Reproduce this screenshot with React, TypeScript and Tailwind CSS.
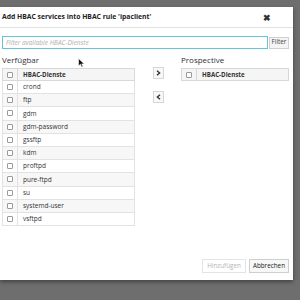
const AVAILABLE = [
  'crond',
  'ftp',
  'gdm',
  'gdm-password',
  'gssftp',
  'kdm',
  'proftpd',
  'pure-ftpd',
  'su',
  'systemd-user',
  'vsftpd',
];

function Box() {
  return <span className="block w-[6px] h-[6px] border border-[#9a9a9a] rounded-[1px] bg-white" />;
}

function HeadRow() {
  return (
    <div className="flex h-[13px] bg-[#f5f5f5] border border-[#d8d8d8]">
      <div className="w-[15px] flex items-center justify-center border-r border-[#d8d8d8]">
        <Box />
      </div>
      <div className="pl-[5px] flex items-center font-bold text-[6.2px] text-[#333]">HBAC-Dienste</div>
    </div>
  );
}

export default function App() {
  return (
    <div className="relative w-[300px] h-[300px] bg-[#6e6e6e] overflow-hidden pt-[7px] font-['Open_Sans',sans-serif]">
      <div className="w-[293px] h-[273px] bg-white flex flex-col shadow-[0_2px_4px_rgba(0,0,0,0.4)]">
        {/* header */}
        <div className="h-[21px] border-b border-[#e2e2e2] flex items-center justify-between pl-[2px] pr-[22px]">
          <span className="font-bold text-[6.8px] text-[#222]">
            Add HBAC services into HBAC rule 'ipaclient'
          </span>
          <span className="font-bold text-[9px] leading-none text-[#333]">✖</span>
        </div>

        {/* body */}
        <div className="flex-1 flex flex-col pl-[2px] pr-[4px] pt-[8px]">
          <div className="flex items-center gap-[1px]">
            <input
              readOnly
              placeholder="Filter available HBAC-Dienste"
              className="w-[266px] h-[13px] border border-[#66c3d9] px-[3px] text-[6.5px] italic placeholder:text-[#b0b0b0] outline-none"
            />
            <button className="w-[20px] h-[12px] border border-[#d0d0d0] bg-[#f5f5f5] text-[6.3px] text-[#444] leading-none">
              Filter
            </button>
          </div>

          <div className="flex mt-[5px]">
            <div className="w-[133px]">
              <div className="text-[8px] text-[#333] h-[14px] leading-[12px]">Verfügbar</div>
              <HeadRow />
              {AVAILABLE.map((name, i) => (
                <div
                  key={name}
                  className={`flex h-[13.2px] border-x border-b border-[#e2e2e2] ${i % 2 === 1 ? 'bg-[#f7f7f7]' : 'bg-white'}`}
                >
                  <div className="w-[15px] flex items-center justify-center border-r border-[#e2e2e2]">
                    <Box />
                  </div>
                  <div className="pl-[5px] flex items-center text-[6.5px] text-[#333]">{name}</div>
                </div>
              ))}
            </div>

            <div className="w-[46px] flex flex-col items-center pt-[13px] gap-[12px]">
              <button className="w-[11px] h-[12px] border border-[#d6d6d6] bg-[#f8f8f8] flex items-center justify-center">
                <svg width="5" height="6" viewBox="0 0 5 6" fill="none" stroke="#333" strokeWidth="1.4">
                  <path d="M1 0.8 L3.6 3 L1 5.2" />
                </svg>
              </button>
              <button className="w-[11px] h-[12px] border border-[#d6d6d6] bg-[#f8f8f8] flex items-center justify-center">
                <svg width="5" height="6" viewBox="0 0 5 6" fill="none" stroke="#333" strokeWidth="1.4">
                  <path d="M4 0.8 L1.4 3 L4 5.2" />
                </svg>
              </button>
            </div>

            <div className="w-[108px]">
              <div className="text-[8px] text-[#333] h-[14px] leading-[12px]">Prospective</div>
              <HeadRow />
            </div>
          </div>

          <div className="mt-auto mb-[7px] flex justify-end gap-[3px]">
            <button className="h-[14px] px-[4px] border border-[#e4e4e4] bg-white text-[6.3px] text-[#b5b5b5] leading-none">
              Hinzufügen
            </button>
            <button className="h-[14px] px-[3px] border border-[#cfcfcf] bg-[#f7f7f7] text-[6.3px] text-[#222] font-medium leading-none">
              Abbrechen
            </button>
          </div>
        </div>
      </div>

      {/* mouse pointer */}
      <svg className="absolute left-[78px] top-[58px]" width="7" height="10" viewBox="0 0 7 10">
        <path d="M0.5 0.5 L0.5 8 L2.4 6.3 L3.8 9.3 L5 8.8 L3.7 5.9 L6.3 5.9 Z" fill="#111" stroke="#fff" strokeWidth="0.6" />
      </svg>
    </div>
  );
}
